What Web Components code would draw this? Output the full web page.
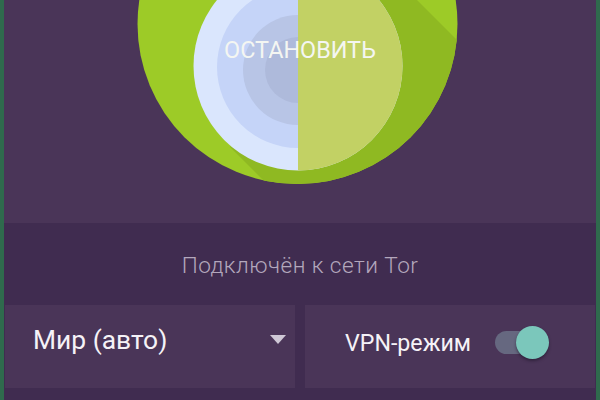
<!DOCTYPE html>
<html>
<head>
<meta charset="utf-8">
<style>
html, body { margin: 0; height: 100%; background: #2f6a4d; }
body { font-family: Roboto, "Liberation Sans", sans-serif; overflow: hidden; }
</style>
</head>
<body>
<vpn-screen>
  <onion-button slot="hero" label="ОСТАНОВИТЬ"></onion-button>
  <status-bar slot="status">Подключён к сети Tor</status-bar>
  <country-select slot="left">Мир (авто)</country-select>
  <vpn-toggle slot="right">VPN-режим</vpn-toggle>
</vpn-screen>

<template id="screen-tpl">
  <style>
    :host { display: block; width: 600px; height: 400px; padding: 0 4px; box-sizing: border-box; }
    .main { height: 400px; background: #402c50; display: grid; grid-template-rows: 223px 82px 83px 12px; }
    .row { display: grid; grid-template-columns: 290px 290px; column-gap: 10px; padding-left: 1px; grid-row: 3; }
  </style>
  <div class="main">
    <slot name="hero"></slot>
    <slot name="status"></slot>
    <div class="row">
      <slot name="left"></slot>
      <slot name="right"></slot>
    </div>
  </div>
</template>

<template id="onion-tpl">
  <style>
    :host { display: block; position: relative; height: 223px; background: #4a3558; overflow: hidden; }
    svg { display: block; }
    span { position: absolute; left: 0; right: 0; top: 36px; text-align: center; color: #f4f6f2;
           font-size: 23.4px; font-weight: 400; line-height: 28px; }
  </style>
  <svg width="592" height="223" viewBox="4 0 592 223">
    <defs><clipPath id="outer"><circle cx="297.5" cy="24" r="160"/></clipPath>
    <clipPath id="right-half"><rect x="298" y="-60" width="130" height="260"/></clipPath></defs>
    <circle cx="297.5" cy="24" r="160" fill="#9dcb27"/>
    <polygon clip-path="url(#outer)" points="417,0 560,143 380,297 230,147 298,66 380,-20" fill="#8fb922"/>
    <circle cx="298" cy="66" r="104.5" fill="#dae6fd"/>
    <circle cx="298" cy="67" r="81" fill="#c5d4f8"/>
    <circle cx="298" cy="70" r="55" fill="#b8c5e6"/>
    <circle cx="298" cy="70" r="33" fill="#aebadb"/>
    <circle cx="298" cy="66" r="104.5" fill="#c2d164" clip-path="url(#right-half)"/>
  </svg>
  <span></span>
</template>

<template id="status-tpl">
  <style>
    :host { display: flex; align-items: center; justify-content: center; height: 82px; padding-top: 2px; box-sizing: border-box;
            color: #b3a7bc; font-size: 22.6px; font-weight: 300; letter-spacing: .45px; }
  </style>
  <slot></slot>
</template>

<template id="select-tpl">
  <style>
    :host { display: flex; align-items: center; justify-content: space-between; background: #4a3558;
            padding: 0 9px 0 28px; color: #f5f2f7; font-size: 26.4px; }
    i { width: 0; height: 0; margin-bottom: 14px; border: 8.5px solid transparent; border-top: 9px solid #cfc8d6; border-bottom: 0; }
    div { margin-bottom: 13px; }
  </style>
  <div><slot></slot></div>
  <i></i>
</template>

<template id="toggle-tpl">
  <style>
    :host { display: flex; align-items: center; background: #4a3558; padding-left: 40px; padding-bottom: 8px; box-sizing: border-box; color: #f5f2f7; font-size: 23.2px; }
    .sw { position: relative; width: 40px; height: 23px; margin-left: 24px; border-radius: 12px; background: #666880; }
    .sw::after { content: ""; position: absolute; right: -14px; top: -5px; width: 33px; height: 33px; border-radius: 50%;
                 background: #7bc7bb; box-shadow: 0 2px 3px rgba(30,20,40,.55); }
  </style>
  <slot></slot>
  <div class="sw"></div>
</template>

<script>
function tpl(id) {
  return document.getElementById(id).content.cloneNode(true);
}

class VpnScreen extends HTMLElement {
  constructor() {
    super();
    this.attachShadow({ mode: 'open' }).appendChild(tpl('screen-tpl'));
  }
}

class OnionButton extends HTMLElement {
  constructor() {
    super();
    this.attachShadow({ mode: 'open' }).appendChild(tpl('onion-tpl'));
  }
  connectedCallback() {
    this.shadowRoot.querySelector('span').textContent = this.getAttribute('label');
  }
}

class StatusBar extends HTMLElement {
  constructor() {
    super();
    this.attachShadow({ mode: 'open' }).appendChild(tpl('status-tpl'));
  }
}

class CountrySelect extends HTMLElement {
  constructor() {
    super();
    this.attachShadow({ mode: 'open' }).appendChild(tpl('select-tpl'));
  }
}

class VpnToggle extends HTMLElement {
  constructor() {
    super();
    this.attachShadow({ mode: 'open' }).appendChild(tpl('toggle-tpl'));
  }
}

customElements.define('vpn-screen', VpnScreen);
customElements.define('onion-button', OnionButton);
customElements.define('status-bar', StatusBar);
customElements.define('country-select', CountrySelect);
customElements.define('vpn-toggle', VpnToggle);
</script>
</body>
</html>
